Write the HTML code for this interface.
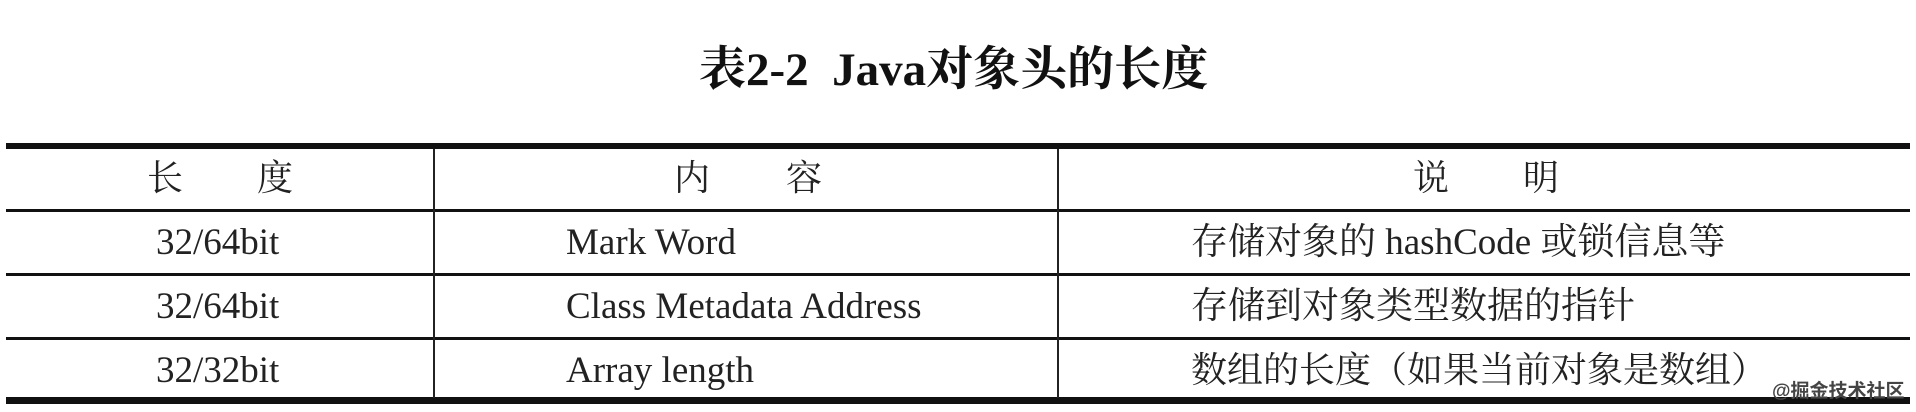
<!DOCTYPE html>
<html><head><meta charset="utf-8"><style>
body{margin:0;width:1916px;height:412px;background:#fff;position:relative;overflow:hidden;font-family:"Liberation Serif","Noto Serif CJK SC",serif;color:#222}
.t{position:absolute;white-space:nowrap;line-height:1}
.h{position:absolute;left:6px;width:1904px;background:#111}
.v{position:absolute;width:2px;background:#222;top:149px;height:249px}
.c{font-size:37px}
.hd{font-size:36px;top:160px}
</style></head><body>
<div class="t" style="left:699px;top:47px;font-size:47px;font-weight:bold;color:#111">表2-2&nbsp;&nbsp;Java对象头的长度</div>
<div class="h" style="top:143px;height:6px"></div>
<div class="h" style="top:209px;height:3px"></div>
<div class="h" style="top:273px;height:3px"></div>
<div class="h" style="top:337px;height:3px"></div>
<div class="h" style="top:397px;height:7px"></div>
<div class="v" style="left:433px"></div>
<div class="v" style="left:1057px"></div>
<div class="t hd" style="left:147px">长</div><div class="t hd" style="left:257px">度</div>
<div class="t hd" style="left:674px">内</div><div class="t hd" style="left:786px">容</div>
<div class="t hd" style="left:1413px">说</div><div class="t hd" style="left:1523px">明</div>
<div class="t c" style="left:156px;top:224px">32/64bit</div>
<div class="t c" style="left:566px;top:224px">Mark Word</div>
<div class="t c" style="left:1191px;top:224px">存储对象的 hashCode 或锁信息等</div>
<div class="t c" style="left:156px;top:288px">32/64bit</div>
<div class="t c" style="left:566px;top:288px">Class Metadata Address</div>
<div class="t c" style="left:1191px;top:288px">存储到对象类型数据的指针</div>
<div class="t c" style="left:156px;top:352px">32/32bit</div>
<div class="t c" style="left:566px;top:352px">Array length</div>
<div class="t c" style="left:1191px;top:352px;font-size:36px">数组的长度（如果当前对象是数组）</div>
<div class="t" style="left:1772px;top:382px;font-size:19px;color:#444;font-weight:bold;font-family:'Liberation Sans','Noto Sans CJK SC',sans-serif">@掘金技术社区</div>
</body></html>
